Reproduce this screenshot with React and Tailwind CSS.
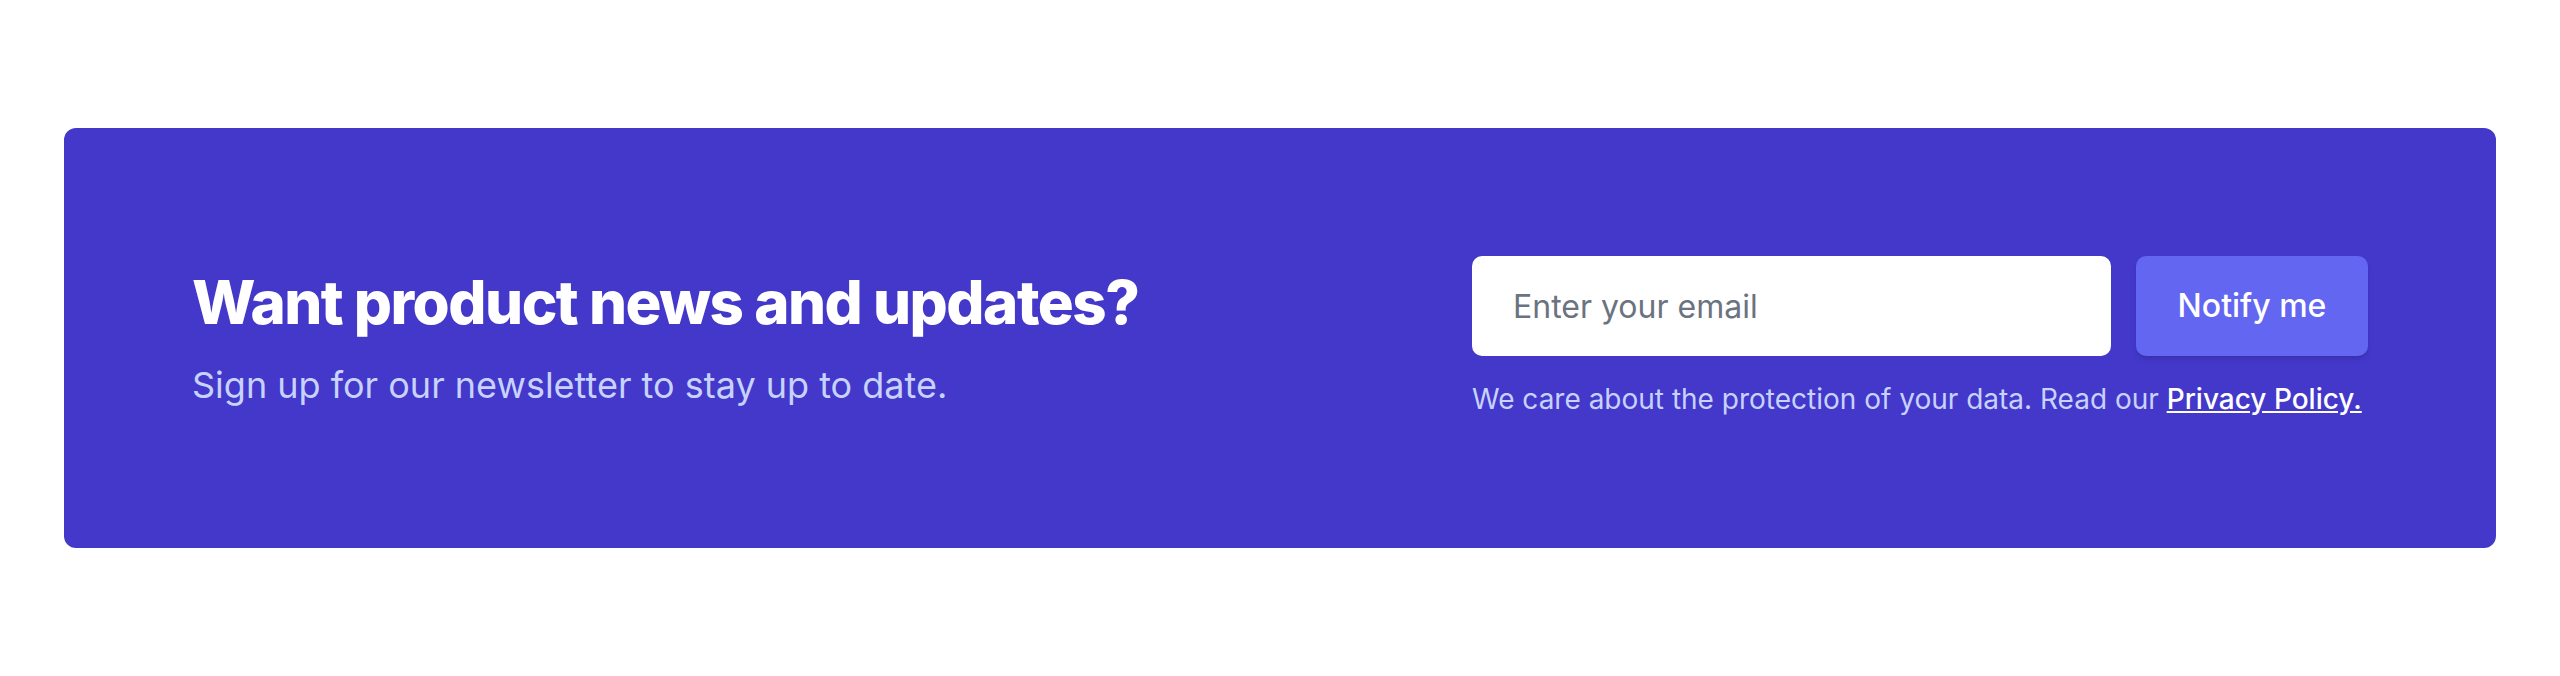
import React from "react";

export default function App() {
  return (
    <div className="min-h-[676px] bg-white px-16 py-32" style={{ fontFamily: "Inter, 'Noto Sans', sans-serif" }}>
      <div className="flex items-center justify-between rounded-xl bg-[#4338ca] p-32">
        <div className="mt-[8px]">
          <h2 className="text-[60px] leading-[60px] font-extrabold tracking-tight text-white">
            Want product news and updates?
          </h2>
          <p className="mt-[26px] text-[36px] leading-[54px] text-[#c7d2fe]">
            Sign up for our newsletter to stay up to date.
          </p>
        </div>
        <div>
          <form className="flex gap-[25px]" onSubmit={(e) => e.preventDefault()}>
            <input
              type="email"
              placeholder="Enter your email"
              className="h-[100px] w-[639px] rounded-[10px] bg-white pl-[41px] pr-6 text-[32px] text-gray-900 placeholder:text-[#6b7280] outline-none"
            />
            <button
              type="submit"
              className="h-[100px] w-[232px] rounded-[10px] bg-[#6366f1] text-[32px] font-medium text-white shadow-md"
            >
              Notify me
            </button>
          </form>
          <p className="mt-[22px] text-[28px] leading-[42px] text-[#c7d2fe]">
            We care about the protection of your data. Read our{" "}
            <a href="#" className="font-medium text-white underline">
              Privacy Policy.
            </a>
          </p>
        </div>
      </div>
    </div>
  );
}
